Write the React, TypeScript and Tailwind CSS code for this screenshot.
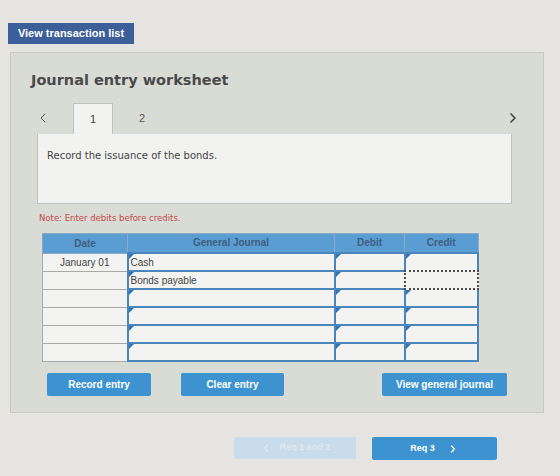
import { ChevronLeft, ChevronRight } from "lucide-react";

const rows = [
  { date: "January 01", account: "Cash" },
  { date: "", account: "Bonds payable" },
  { date: "", account: "" },
  { date: "", account: "" },
  { date: "", account: "" },
  { date: "", account: "" },
];

// little blue corner mark on editable cells
const Corner = () => (
  <span className="absolute left-0 top-0 h-0 w-0 border-l-[5px] border-b-[5px] border-l-[#2f74b5] border-b-transparent" />
);

const App = () => {
  return (
    <div className="min-h-[476px] w-[560px] bg-[#e5e4e0] pt-[23px] font-['Liberation_Sans',sans-serif]">
      <button className="ml-2 block h-[21px] w-[126px] bg-[#3c5f9a] text-[11px] font-bold text-white">
        View transaction list
      </button>

      {/* Worksheet panel */}
      <div className="ml-[10px] mt-[8px] h-[361px] w-[534px] border border-[#c9cac4] bg-[#d9dcd5]">
        <h2 className="ml-[20px] mt-[17px] font-['DejaVu_Sans',sans-serif] text-[14.5px] font-bold text-[#4a4a4a]">
          Journal entry worksheet
        </h2>

        <div className="mt-[11px] flex h-[31px] items-center">
          <ChevronLeft className="ml-[24px] h-4 w-4 text-[#555]" strokeWidth={1.5} />
          <div className="ml-[22px] flex h-[31px] w-[40px] items-center justify-center self-end border border-b-0 border-[#bfc1bb] bg-[#f2f2f0] text-[11px] text-[#444]">
            1
          </div>
          <span className="ml-[26px] text-[11px] text-[#555]">2</span>
          <ChevronRight className="ml-auto mr-[22px] h-4 w-4 text-[#444]" strokeWidth={2.5} />
        </div>

        <div className="ml-[26px] h-[70px] w-[475px] border border-t-0 border-[#bfc1bb] bg-[#f2f2f0] pl-[9px] pt-[14px] font-['DejaVu_Sans',sans-serif] text-[10px] text-[#444]">
          Record the issuance of the bonds.
        </div>

        <p className="ml-[28px] mt-[8px] font-['DejaVu_Sans',sans-serif] text-[8.5px] text-[#c64a4a]">
          Note: Enter debits before credits.
        </p>

        {/* Journal table */}
        <table className="ml-[31px] mt-[8px] w-[437px] border-collapse text-[10px]">
          <thead>
            <tr className="h-[20px] bg-[#5a9dd3] text-[#3f5e80]">
              <th className="w-[85px] border border-[#8aa9c4] font-bold">Date</th>
              <th className="w-[207px] border border-[#8aa9c4] font-bold">General Journal</th>
              <th className="w-[70px] border border-[#8aa9c4] font-bold">Debit</th>
              <th className="border border-[#8aa9c4] font-bold">Credit</th>
            </tr>
          </thead>
          <tbody>
            {rows.map((r, i) => (
              <tr key={i} className="h-[18px] bg-[#f3f3f1]">
                <td className="border border-[#a9aaa6] text-center text-[#444]">{r.date}</td>
                <td className="relative border-2 border-[#4a86bb] pl-[2px] text-[#444]">
                  <Corner />
                  {r.account}
                </td>
                <td className="relative border-2 border-[#4a86bb]">
                  <Corner />
                </td>
                <td className="relative border-2 border-[#4a86bb]">
                  {i === 1 ? (
                    <span className="absolute -inset-[2px] border-2 border-dotted border-[#4a4a4a] bg-[#f3f3f1]" />
                  ) : (
                    <Corner />
                  )}
                </td>
              </tr>
            ))}
          </tbody>
        </table>

        <div className="mt-[11px] flex items-center">
          <button className="ml-[36px] h-[23px] w-[104px] rounded-[2px] bg-[#3d93cf] text-[10px] font-bold text-white">
            Record entry
          </button>
          <button className="ml-[30px] h-[23px] w-[103px] rounded-[2px] bg-[#3d93cf] text-[10px] font-bold text-white">
            Clear entry
          </button>
          <button className="ml-[98px] h-[23px] w-[125px] rounded-[2px] bg-[#3d93cf] text-[10px] font-bold text-white">
            View general journal
          </button>
        </div>
      </div>

      {/* Requirement navigation */}
      <div className="mt-[24px] flex">
        <button className="ml-[234px] flex h-[22px] w-[122px] items-center justify-center gap-2 rounded-[2px] bg-[#c9dceb] text-[9px] font-bold text-[#dfe9f2]">
          <ChevronLeft className="h-3 w-3" strokeWidth={2.5} />
          Req 1 and 2
        </button>
        <button className="ml-[16px] flex h-[23px] w-[125px] items-center justify-center gap-3 rounded-[2px] bg-[#3d93cf] text-[9px] font-bold text-white">
          Req 3
          <ChevronRight className="h-3 w-3" strokeWidth={2.5} />
        </button>
      </div>
    </div>
  );
};

export default App;
